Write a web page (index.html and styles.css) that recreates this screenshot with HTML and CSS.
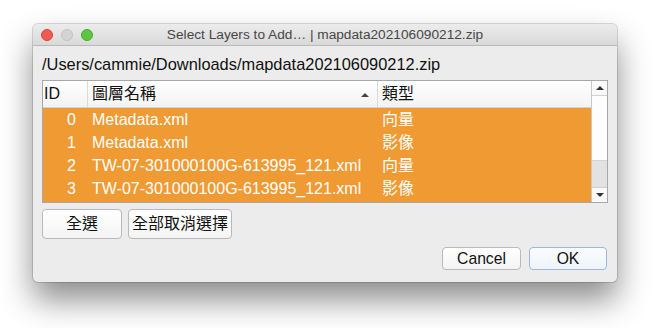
FILE: index.html
```html
<!DOCTYPE html>
<html lang="zh-Hant">
<head>
    <meta charset="UTF-8">
    <meta name="viewport" content="width=device-width, initial-scale=1.0">
    <title>Select Layers to Add</title>
    <link rel="stylesheet" href="styles.css">
</head>
<body>
    <div class="window">
        <div class="titlebar">
            <div class="lights">
                <span class="light red"></span>
                <span class="light off"></span>
                <span class="light green"></span>
            </div>
            <div class="title">Select Layers to Add… | mapdata202106090212.zip</div>
        </div>
        <div class="content">
            <div class="path">/Users/cammie/Downloads/mapdata202106090212.zip</div>

            <div class="table">
                <div class="grid">
                    <div class="row head">
                        <div class="cell id">ID</div>
                        <div class="cell name">圖層名稱<span class="sort"></span></div>
                        <div class="cell type">類型</div>
                    </div>
                    <div class="rows">
                        <div class="row sel">
                            <div class="cell id">0</div>
                            <div class="cell name">Metadata.xml</div>
                            <div class="cell type">向量</div>
                        </div>
                        <div class="row sel">
                            <div class="cell id">1</div>
                            <div class="cell name">Metadata.xml</div>
                            <div class="cell type">影像</div>
                        </div>
                        <div class="row sel">
                            <div class="cell id">2</div>
                            <div class="cell name">TW-07-301000100G-613995_121.xml</div>
                            <div class="cell type">向量</div>
                        </div>
                        <div class="row sel">
                            <div class="cell id">3</div>
                            <div class="cell name">TW-07-301000100G-613995_121.xml</div>
                            <div class="cell type">影像</div>
                        </div>
                        <div class="row sel">
                            <div class="cell id"></div>
                            <div class="cell name"></div>
                            <div class="cell type"></div>
                        </div>
                    </div>
                </div>
                <div class="scrollbar">
                    <div class="arrow up"></div>
                    <div class="thumb"></div>
                    <div class="track"></div>
                    <div class="arrow down"></div>
                </div>
            </div>

            <div class="select-row">
                <button class="btn big all">全選</button>
                <button class="btn big">全部取消選擇</button>
            </div>

            <div class="dialog-row">
                <button class="btn small">Cancel</button>
                <button class="btn small default">OK</button>
            </div>
        </div>
    </div>
</body>
</html>
```

FILE: styles.css
```css
body {
    margin: 0;
    padding: 24px 0 0 33px;
    background: #ffffff;
    font-family: "Liberation Sans", "Noto Sans CJK TC", sans-serif;
    height: 328px;
    box-sizing: border-box;
    overflow: hidden;
}
.window {
    width: 584px;
    height: 258px;
    background-color: #ececec;
    border-radius: 5px;
    box-shadow: 0 18px 32px rgba(0, 0, 0, 0.45), 0 0 0 1px rgba(0, 0, 0, 0.14);
    overflow: hidden;
}
.titlebar {
    height: 21px;
    display: flex;
    align-items: center;
    background: linear-gradient(#ececec, #d9d9d9);
    border-bottom: 1px solid #b9b9b9;
    position: relative;
}
.lights {
    display: flex;
    gap: 8px;
    padding-left: 8px;
}
.light {
    width: 12px;
    height: 12px;
    border-radius: 50%;
    box-sizing: border-box;
}
.red {
    background: #ee5b53;
    border: 1px solid #d8443c;
}
.off {
    background: #d4d4d4;
    border: 1px solid #c2c2c2;
}
.green {
    background: #5fc43f;
    border: 1px solid #4aa92e;
}
.title {
    position: absolute;
    left: 0;
    right: 0;
    text-align: center;
    font-size: 13.7px;
    color: #474747;
    line-height: 21px;
}
.content {
    padding: 0 9px;
}
.path {
    height: 32px;
    padding-top: 2px;
    line-height: 32px;
    font-size: 16.4px;
    color: #111;
}

/* layer table */
.table {
    height: 123px;
    box-sizing: border-box;
    border: 1px solid #a8a8a8;
    background: #fff;
    display: flex;
}
.grid {
    flex: 1;
    display: flex;
    flex-direction: column;
    overflow: hidden;
}
.row {
    display: grid;
    grid-template-columns: 45px 290px 1fr;
    font-size: 16px;
}
.head {
    height: 26px;
    line-height: 26px;
    background: linear-gradient(#ffffff, #f3f3f3);
    border-bottom: 1px solid #d2d2d2;
    color: #111;
}
.head .cell {
    border-right: 1px solid #dadada;
}
.head .cell:last-child {
    border-right: none;
}
.head .id {
    text-align: left;
    padding: 0 0 0 1px;
}
.rows {
    flex: 1;
    overflow: hidden;
}
.sel {
    height: 23px;
    line-height: 23px;
    background: #ef9a33;
    color: #fff;
}
.cell {
    padding-left: 4px;
    white-space: nowrap;
    overflow: hidden;
}
.name {
    position: relative;
}
.id {
    text-align: right;
    padding: 0 12px 0 0;
}
.sort {
    position: absolute;
    right: 8px;
    top: 12px;
    border-left: 4px solid transparent;
    border-right: 4px solid transparent;
    border-bottom: 4px solid #444;
}

/* scrollbar */
.scrollbar {
    width: 15px;
    border-left: 1px solid #c8c8c8;
    display: flex;
    flex-direction: column;
    background: #fff;
}
.arrow {
    height: 14px;
    display: flex;
    align-items: center;
    justify-content: center;
    background: #fafafa;
}
.arrow.up {
    border-bottom: 1px solid #d0d0d0;
}
.arrow.down {
    border-top: 1px solid #cfcfcf;
}
.arrow::after {
    content: "";
    border-left: 4px solid transparent;
    border-right: 4px solid transparent;
}
.up::after {
    border-bottom: 4px solid #333;
}
.down::after {
    border-top: 4px solid #333;
}
.thumb {
    height: 64px;
    background: #fdfdfd;
    border-bottom: 1px solid #d4d4d4;
}
.track {
    flex: 1;
    background: #e2e2e2;
}

/* buttons */
.btn {
    font-family: "Liberation Sans", "Noto Sans CJK TC", sans-serif;
    color: #111;
    background: linear-gradient(#ffffff, #f4f4f4);
    border: 1px solid #b9b9b9;
    border-radius: 4px;
    padding: 0;
    box-sizing: border-box;
}
.select-row {
    display: flex;
    gap: 6px;
    margin-top: 6px;
}
.big {
    height: 30px;
    font-size: 16px;
    line-height: 28px;
    padding: 0 3px;
}
.all {
    width: 80px;
}
.dialog-row {
    display: flex;
    justify-content: flex-end;
    gap: 8px;
    margin-top: 8px;
    padding-right: 1px;
}
.small {
    width: 79px;
    height: 23px;
    font-size: 15.7px;
    line-height: 21px;
}
.default {
    width: 78px;
    border-color: #9cb9dc;
    background: linear-gradient(#fbfdff, #eef3f9);
}
```
